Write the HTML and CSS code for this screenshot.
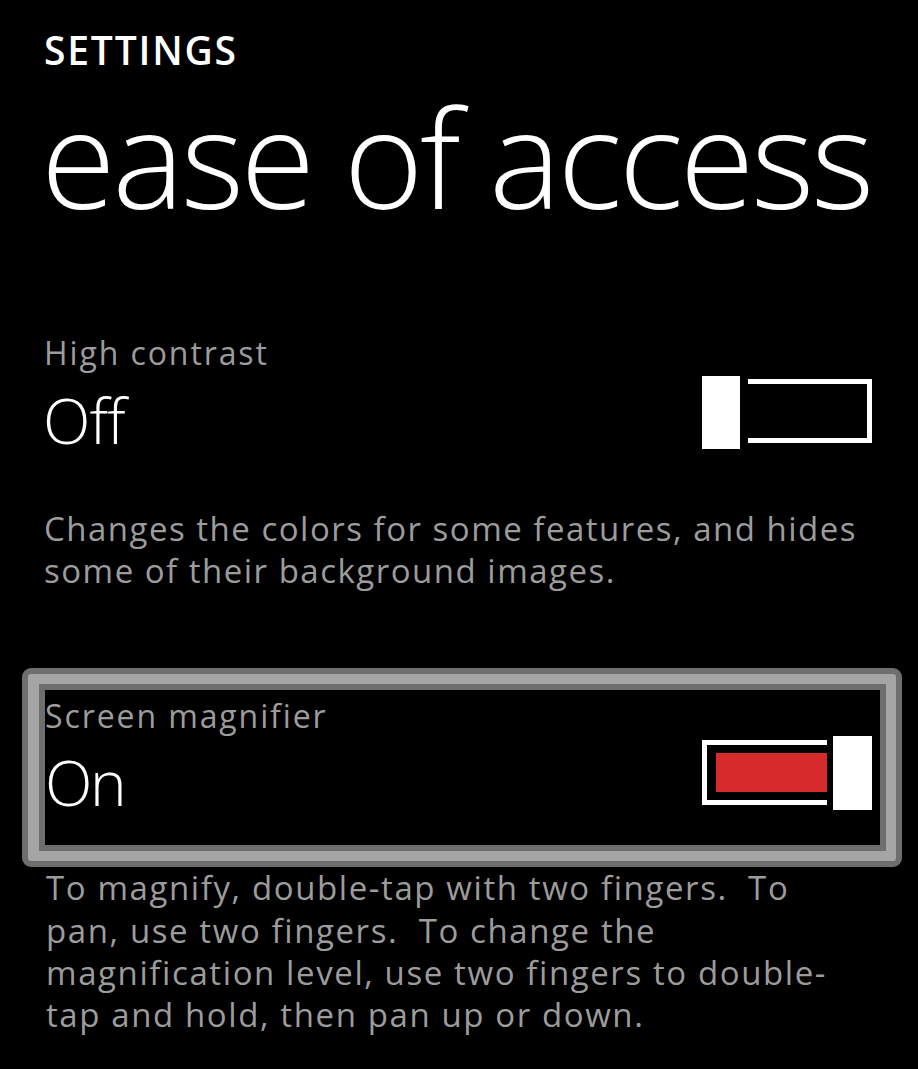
FILE: index.html
```html
<!DOCTYPE html>
<html lang="en">
<head>
<meta charset="utf-8">
<title>Settings - ease of access</title>
<link rel="stylesheet" href="styles.css">
</head>
<body>
<div class="page">
  <header class="header">
    <div class="app-title">SETTINGS</div>
    <h1 class="page-title">ease of access</h1>
  </header>

  <section class="setting setting-plain">
    <div class="setting-head">High contrast</div>
    <div class="setting-row">
      <div class="setting-value value-off">Off</div>
      <div class="toggle toggle-off">
        <div class="thumb"></div>
        <div class="track"></div>
      </div>
    </div>
  </section>
  <p class="desc desc-first">Changes the colors for some features, and hides some of their background images.</p>

  <section class="focus-box">
    <div class="focus-inner">
      <div class="setting-head">Screen magnifier</div>
      <div class="setting-row row-on">
        <div class="setting-value value-on">On</div>
        <div class="toggle toggle-on">
          <div class="track"><div class="fill"></div></div>
          <div class="thumb"></div>
        </div>
      </div>
    </div>
  </section>
  <p class="desc desc-last">To magnify, double-tap with two fingers.&nbsp; To pan, use two fingers.&nbsp; To change the magnification level, use two fingers to double-tap and hold, then pan up or down.</p>
</div>
</body>
</html>
```

FILE: styles.css
```css
html, body {
  margin: 0;
  padding: 0;
  background: #000;
}
body {
  font-family: "Open Sans", "Noto Sans", "DejaVu Sans", sans-serif;
  color: #fff;
}
.page {
  width: 918px;
  height: 1069px;
  overflow: hidden;
  box-sizing: border-box;
  padding: 34.5px 16px 0 22px;
}
.header {
  padding-left: 22px;
}
.app-title {
  font-size: 39px;
  line-height: 30px;
  font-weight: 600;
  letter-spacing: 1.8px;
}
.page-title {
  margin: 37.7px 0 0 -3px;
  font-size: 136px;
  line-height: 110px;
  font-weight: 300;
  letter-spacing: -3.5px;
  white-space: nowrap;
}
.setting-plain {
  margin-top: 124.4px;
  padding: 0 30px 0 22px;
}
.setting-head {
  font-size: 32px;
  line-height: 32px;
  letter-spacing: 1.9px;
  color: #9c9c9c;
  white-space: nowrap;
}
.setting-row {
  display: flex;
  justify-content: space-between;
  align-items: flex-start;
  margin-top: 7.4px;
}
.setting-value {
  font-size: 62px;
  line-height: 62px;
  font-weight: 300;
  letter-spacing: -1px;
}
.value-off {
  margin-top: 13px;
  margin-left: -1px;
}
.toggle {
  display: flex;
  align-items: flex-start;
  width: 170px;
}
.thumb {
  background: #fff;
}
.toggle-off .thumb {
  width: 38px;
  height: 73px;
}
.toggle-off .track {
  box-sizing: border-box;
  width: 124px;
  height: 64px;
  margin: 3px 0 0 8px;
  border: 5px solid #fff;
  border-left: none;
}
.desc {
  margin: 0;
  padding: 0 30px 0 22px;
  font-size: 33px;
  line-height: 42px;
  letter-spacing: 1.5px;
  color: #9c9c9c;
}
.desc-first {
  margin-top: 57px;
}
.focus-box {
  margin-top: 76.4px;
  border: 6px solid #6e6e6e;
  border-radius: 9px;
  background: #a5a5a5;
  padding: 10px 10px 10px 11px;
}
.focus-inner {
  border: 6px solid #6e6e6e;
  background: #000;
  padding: 9.6px 8px 32px 0;
}
.row-on {
  margin-top: 4.4px;
}
.value-on {
  margin-top: 15px;
  letter-spacing: -2.5px;
}
.toggle-on .track {
  box-sizing: border-box;
  width: 125px;
  height: 65px;
  margin-top: 4px;
  border: 5px solid #fff;
  border-right: none;
  padding: 8px 0 8px 9px;
}
.toggle-on .fill {
  height: 100%;
  background: #d62a2b;
}
.toggle-on .thumb {
  width: 39px;
  height: 74px;
  margin-left: 6px;
}
.desc-last {
  margin-top: 0;
  line-height: 42.3px;
  letter-spacing: 1.6px;
  padding: 0 60px 0 24px;
}
```
